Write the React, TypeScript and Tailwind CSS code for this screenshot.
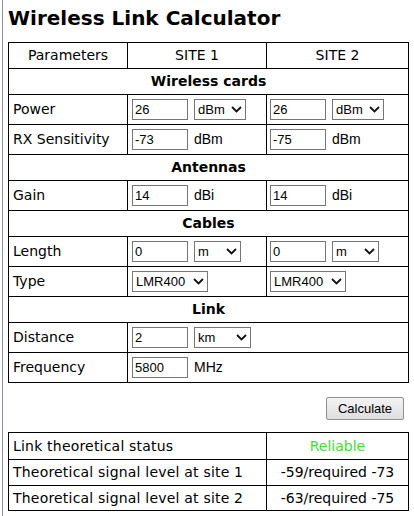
import React from 'react';

const FONT = "font-['DejaVu_Sans',Verdana,sans-serif]";
const CTRL = "font-['Liberation_Sans',Arial,sans-serif] text-[13px] text-black";
const UNIT = "font-['Liberation_Sans',Arial,sans-serif] text-[14px] text-black";

function TextInput({ value }: { value: string }) {
  return (
    <input
      defaultValue={value}
      className={`${CTRL} w-[56px] h-[21px] border border-[#767676] px-[2px] bg-white align-middle outline-none`}
    />
  );
}

function Select({ value, width }: { value: string; width: string }) {
  return (
    <span className={`relative inline-block align-middle ${width}`}>
      <select
        defaultValue={value}
        className={`${CTRL} appearance-none w-full h-[21px] border border-[#767676] pl-[3px] pr-[18px] bg-white rounded-none outline-none`}
      >
        <option>{value}</option>
      </select>
      <svg
        className="pointer-events-none absolute right-[4px] top-[7px]"
        width="11"
        height="7"
        viewBox="0 0 11 7"
      >
        <path d="M1 1 L5.5 5.5 L10 1" fill="none" stroke="#111" strokeWidth="1.8" />
      </svg>
    </span>
  );
}

function Section({ title }: { title: string }) {
  return (
    <tr className="h-[26px]">
      <td colSpan={3} className="border border-black text-center font-bold">
        {title}
      </td>
    </tr>
  );
}

function Row({ label, a, b, span }: { label: string; a?: React.ReactNode; b?: React.ReactNode; span?: boolean }) {
  return (
    <tr className="h-[30px]">
      <td className="border border-black pl-[4px]">{label}</td>
      <td colSpan={span ? 2 : 1} className="border border-black pl-[4px]">
        <div className="flex items-center gap-[6px]">{a}</div>
      </td>
      {!span && (
        <td className="border border-black pl-[3px]">
          <div className="flex items-center gap-[6px]">{b}</div>
        </td>
      )}
    </tr>
  );
}

export default function App() {
  return (
    <div className={`${FONT} relative w-[414px] h-[516px] bg-white text-black text-[14px] overflow-hidden`}>
      <div className="absolute left-[2px] top-0 bottom-0 w-px bg-[#8a93a3]" />
      <div className="pl-[8px] pr-[6px]">
        <h1 className="text-[20px] font-bold leading-none pt-[8px] pb-[14px]">
          Wireless Link Calculator
        </h1>

        <table className="border-collapse w-[400px] table-fixed">
          <colgroup>
            <col className="w-[119px]" />
            <col className="w-[139px]" />
            <col className="w-[142px]" />
          </colgroup>
          <tbody>
            <tr className="h-[26px]">
              <td className="border border-black text-center">Parameters</td>
              <td className="border border-black text-center">SITE 1</td>
              <td className="border border-black text-center">SITE 2</td>
            </tr>
            <Section title="Wireless cards" />
            <Row
              label="Power"
              a={<><TextInput value="26" /><Select value="dBm" width="w-[52px]" /></>}
              b={<><TextInput value="26" /><Select value="dBm" width="w-[52px]" /></>}
            />
            <Row
              label="RX Sensitivity"
              a={<><TextInput value="-73" /><span className={UNIT}>dBm</span></>}
              b={<><TextInput value="-75" /><span className={UNIT}>dBm</span></>}
            />
            <Section title="Antennas" />
            <Row
              label="Gain"
              a={<><TextInput value="14" /><span className={UNIT}>dBi</span></>}
              b={<><TextInput value="14" /><span className={UNIT}>dBi</span></>}
            />
            <Section title="Cables" />
            <Row
              label="Length"
              a={<><TextInput value="0" /><Select value="m" width="w-[47px]" /></>}
              b={<><TextInput value="0" /><Select value="m" width="w-[47px]" /></>}
            />
            <Row
              label="Type"
              a={<Select value="LMR400" width="w-[76px]" />}
              b={<Select value="LMR400" width="w-[76px]" />}
            />
            <Section title="Link" />
            <Row
              label="Distance"
              span
              a={<><TextInput value="2" /><Select value="km" width="w-[57px]" /></>}
            />
            <Row
              label="Frequency"
              span
              a={<><TextInput value="5800" /><span className={UNIT}>MHz</span></>}
            />
          </tbody>
        </table>

        <div className="flex justify-end pr-[4px] mt-[14px] mb-[12px]">
          <button
            className={`${CTRL} w-[78px] h-[23px] border border-[#8f8f8f] rounded-[2px] bg-gradient-to-b from-[#f4f4f4] to-[#dedede]`}
          >
            Calculate
          </button>
        </div>

        <table className="border-collapse w-[400px] table-fixed">
          <colgroup>
            <col className="w-[258px]" />
            <col className="w-[142px]" />
          </colgroup>
          <tbody>
            <tr className="h-[27px]">
              <td className="border border-black pl-[4px] tracking-[0.2px]">Link theoretical status</td>
              <td className="border border-black text-center text-[#44dd33]">Reliable</td>
            </tr>
            <tr className="h-[26px]">
              <td className="border border-black pl-[4px] tracking-[0.2px]">Theoretical signal level at site 1</td>
              <td className="border border-black text-center">-59/required -73</td>
            </tr>
            <tr className="h-[25px]">
              <td className="border border-black pl-[4px] tracking-[0.2px]">Theoretical signal level at site 2</td>
              <td className="border border-black text-center">-63/required -75</td>
            </tr>
          </tbody>
        </table>
      </div>
    </div>
  );
}
